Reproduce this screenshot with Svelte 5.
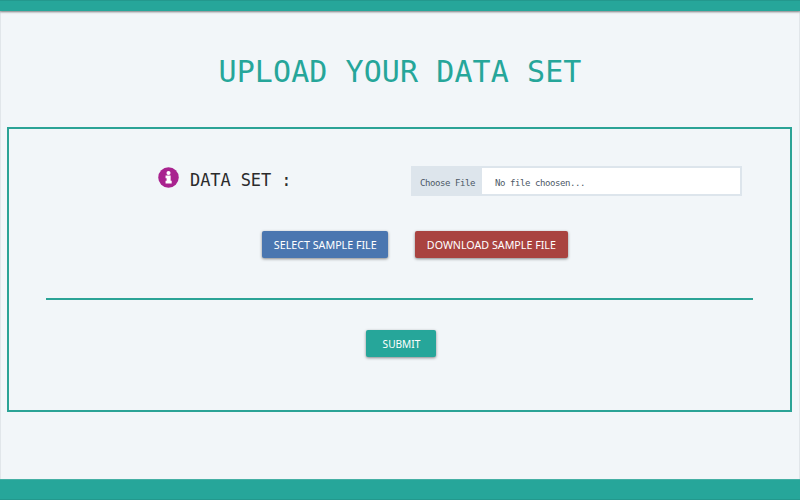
<script>
  const actions = [
    { label: 'SELECT SAMPLE FILE', tone: 'blue' },
    { label: 'DOWNLOAD SAMPLE FILE', tone: 'red' }
  ];
</script>

<div class="page">
  <header></header>
  <main>
    <h1>UPLOAD YOUR DATA SET</h1>
    <section class="panel">
      <div class="field">
        <div class="label">
          <svg viewBox="0 0 512 512" width="21" height="21" aria-hidden="true">
            <circle cx="256" cy="256" r="250" fill="#a9238f" />
            <circle cx="256" cy="146" r="50" fill="#fff" />
            <path d="M184 208h124v126h26v66H184v-66h26v-60h-26z" fill="#fff" />
          </svg>
          <span>DATA SET :</span>
        </div>
        <div class="file">
          <span class="choose">Choose File</span>
          <span class="name">No file choosen...</span>
        </div>
      </div>
      <div class="actions">
        {#each actions as action}
          <button class={action.tone}><span>{action.label}</span></button>
        {/each}
      </div>
      <hr />
      <button class="submit"><span>SUBMIT</span></button>
    </section>
  </main>
  <footer></footer>
</div>

<style>
  :global(body) {
    margin: 0;
  }
  .page {
    box-sizing: border-box;
    width: 800px;
    height: 500px;
    display: flex;
    flex-direction: column;
    background: #f2f6f9;
    font-family: 'DejaVu Sans Mono', monospace;
    box-shadow: inset 1px 0 #e1e6ea, inset -1px 0 #e1e6ea;
    overflow: hidden;
  }
  header {
    height: 11px;
    background: #26a69a;
    border-top: 1px solid #23988d;
    box-sizing: border-box;
    box-shadow: 0 1px 2px rgba(0, 0, 0, 0.5);
  }
  main {
    flex: 1;
  }
  h1 {
    margin: 41px 0 0;
    height: 40px;
    line-height: 40px;
    text-align: center;
    font-weight: 400;
    font-size: 30px;
    letter-spacing: 0.08px;
    color: #26a69a;
  }
  .panel {
    box-sizing: border-box;
    width: 785px;
    height: 285px;
    margin: 35px 0 0 7px;
    border: 2px solid #2ba396;
    padding: 37px 38px 0 37px;
    display: flex;
    flex-direction: column;
    align-items: center;
  }
  .field {
    display: flex;
    width: 100%;
    height: 30px;
  }
  .label {
    box-sizing: border-box;
    width: 365px;
    padding: 1px 0 0 112px;
    display: flex;
    align-items: flex-start;
    font-size: 17px;
    line-height: 24px;
    color: #2b2b2b;
  }
  .label span {
    margin: 1px 0 0 11px;
    letter-spacing: -0.1px;
    white-space: pre;
  }
  .file {
    box-sizing: border-box;
    width: 331px;
    height: 30px;
    border: 2px solid #dde5ec;
    background: #fff;
    display: flex;
    font-size: 9px;
    letter-spacing: -0.42px;
    line-height: 30px;
    color: #4c5866;
  }
  .choose {
    box-sizing: border-box;
    width: 69px;
    padding-left: 7px;
    background: #dde5ec;
  }
  .name {
    padding-left: 13px;
  }
  .actions {
    display: flex;
    gap: 27px;
    margin: 35px 0 0 31px;
  }
  button {
    display: flex;
    align-items: center;
    justify-content: center;
    height: 27px;
    padding: 0;
    border: 0;
    border-radius: 2px;
    color: #fff;
    font: 11.5px 'Noto Sans', sans-serif;
    white-space: nowrap;
    box-shadow: 0 1px 3px rgba(0, 0, 0, 0.45);
  }
  button span {
    transform: scaleX(0.93);
  }
  .blue {
    width: 126px;
    padding-left: 1px;
    background: #4a76b0;
  }
  .red {
    width: 153px;
    background: #a94340;
  }
  hr {
    width: 707px;
    height: 2px;
    margin: 40px 0 0 1px;
    border: 0;
    background: #2ba396;
  }
  .submit {
    width: 70px;
    margin: 30px 0 0 4px;
    padding-left: 1px;
    background: #26a69a;
  }
  .submit span {
    transform: scaleX(0.88);
  }
  footer {
    box-sizing: border-box;
    height: 21px;
    background: #26a69a;
    border-top: 1px solid #45b0a5;
    border-bottom: 1px solid #23988d;
  }
</style>
